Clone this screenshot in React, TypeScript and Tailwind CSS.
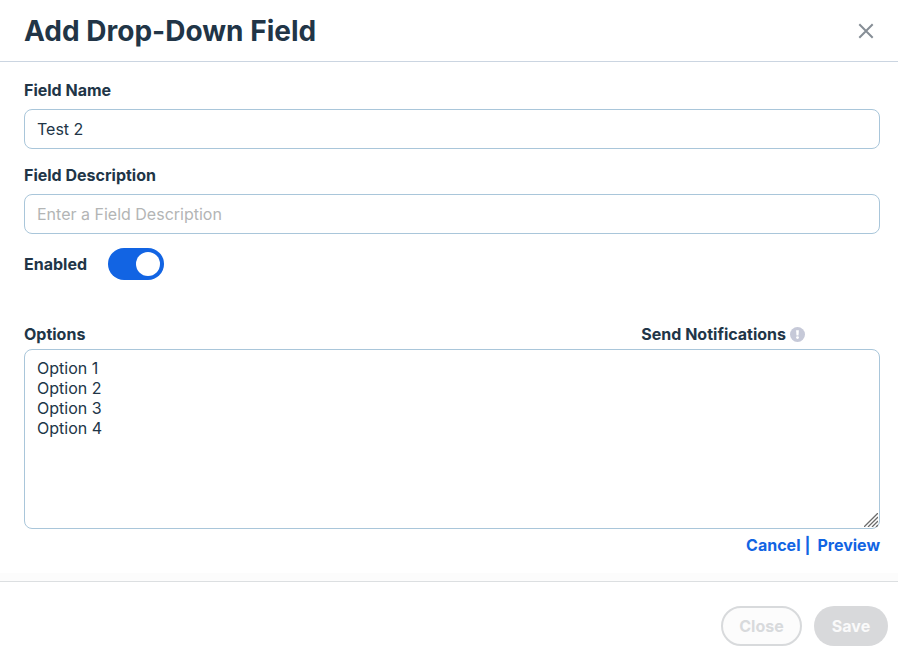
import React, { useState } from "react";

const labelClass = "text-base leading-5 font-bold text-[#213547]";
const fieldClass =
  "block w-full rounded-lg border border-[#a9c6da] bg-white px-3 text-base text-[#213547] outline-none placeholder:text-[#b3b5b5]";

const Toggle = ({ checked, onChange }: { checked: boolean; onChange: (value: boolean) => void }) => (
  <button
    type="button"
    role="switch"
    aria-checked={checked}
    onClick={() => onChange(!checked)}
    className={`flex h-8 w-14 items-center rounded-full px-1 ${checked ? "justify-end bg-[#1264e3]" : "justify-start bg-[#c5cad0]"}`}
  >
    <span className="h-6 w-6 rounded-full bg-white" />
  </button>
);

export default function App() {
  const [name, setName] = useState("Test 2");
  const [description, setDescription] = useState("");
  const [enabled, setEnabled] = useState(true);
  const [options, setOptions] = useState("Option 1\nOption 2\nOption 3\nOption 4");

  return (
    <div className="flex h-[659px] w-[898px] flex-col bg-white font-['Inter',sans-serif]">
      <header className="flex h-[62px] shrink-0 items-center justify-between border-b border-[#cbd5e1] pr-6 pl-6">
        <h1 className="text-[28px] leading-9 font-bold tracking-[0.02px] text-[#213547]">Add Drop-Down Field</h1>
        <button type="button" aria-label="Close dialog">
          <svg width="16" height="16" viewBox="0 0 16 16" fill="none" stroke="#868e96" strokeWidth="2">
            <path d="M1.3 1.3l13.4 13.4M14.7 1.3L1.3 14.7" />
          </svg>
        </button>
      </header>

      <main className="flex h-[511px] shrink-0 flex-col pt-[18px] pr-[18px] pl-6">
        <label className={labelClass}>Field Name</label>
        <input
          className={`${fieldClass} mt-[9px] h-10 shrink-0`}
          value={name}
          onChange={(e) => setName(e.target.value)}
        />
        <label className={`${labelClass} mt-4`}>Field Description</label>
        <input
          className={`${fieldClass} mt-[9px] h-10 shrink-0`}
          placeholder="Enter a Field Description"
          value={description}
          onChange={(e) => setDescription(e.target.value)}
        />

        <div className="mt-3.5 flex items-center">
          <span className={`${labelClass} w-21`}>Enabled</span>
          <Toggle checked={enabled} onChange={setEnabled} />
        </div>

        <div className="mt-11 flex items-center justify-between pr-[75px]">
          <label className={labelClass}>Options</label>
          <div className="flex items-center gap-1">
            <span className={labelClass}>Send Notifications</span>
            <svg width="15" height="15" viewBox="0 0 15 15">
              <circle cx="7.5" cy="7.5" r="7.5" fill="#c6c9d8" />
              <path d="M6.1 3.3h2.8l-.4 5.1h-2z" fill="white" />
              <circle cx="7.5" cy="10.6" r="1.4" fill="white" />
            </svg>
          </div>
        </div>
        <div className="relative mt-[5px] shrink-0">
          <textarea
            className={`${fieldClass} h-[180px] resize-none pt-2 leading-5`}
            value={options}
            onChange={(e) => setOptions(e.target.value)}
          />
          {/* resize grip */}
          <svg
            className="pointer-events-none absolute right-0.5 bottom-0.5"
            width="14"
            height="14"
            viewBox="0 0 14 14"
            stroke="#6b6b6b"
            strokeWidth="1.3"
          >
            <path d="M0 14L14 0M4 14L14 4M8 14l6-6M12 14l2-2" />
          </svg>
        </div>
        <div className="mt-1.5 flex justify-end text-base leading-5 font-bold text-[#1264e3]">
          <button type="button">Cancel</button>
          <span className="mr-[7px] ml-1">|</span>
          <button type="button">Preview</button>
        </div>
      </main>
      <div className="h-2 shrink-0 bg-[#fcfcfc]" />

      <footer className="flex h-[78px] shrink-0 items-start justify-end gap-3 border-t border-[#dcdfe1] pt-6 pr-2.5">
        <button type="button" disabled className="h-10 w-[81px] rounded-full border-2 border-[#d8dadc] bg-[#fcfcfc] text-base font-bold text-[#d8dadc]">
          Close
        </button>
        <button type="button" disabled className="h-10 w-[74px] rounded-full bg-[#d8d9db] text-base font-bold text-[#fafafa]">
          Save
        </button>
      </footer>
    </div>
  );
}
